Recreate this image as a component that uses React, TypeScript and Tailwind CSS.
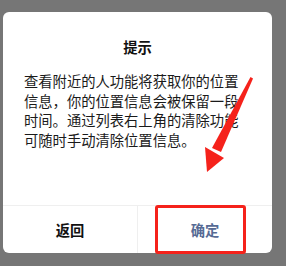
export default function App() {
  return (
    <div
      className="relative w-[286px] h-[266px] bg-[#767676] pt-[12px] pl-[3px] overflow-hidden"
      style={{ fontFamily: '"Noto Sans CJK SC", "Noto Sans", sans-serif' }}
    >
      <div className="flex flex-col w-[269px] h-[241px] bg-white rounded-[6px]">
        <div className="pt-[25px] h-[45px] text-center text-[14.3px] leading-[20px] font-bold text-[#111]">
          提示
        </div>
        <p className="mt-[14px] px-[21px] text-[14.3px] leading-[19.5px] text-[#1a1a1a]">
          查看附近的人功能将获取你的位置信息，你的位置信息会被保留一段时间。通过列表右上角的清除功能可随时手动清除位置信息。
        </p>
        <div className="mt-auto flex h-[48px] border-t border-[#efefef]">
          <button className="flex-1 flex items-center justify-center text-[14.3px] font-bold text-[#111] border-r border-[#efefef]">
            返回
          </button>
          <button className="flex-1 flex items-center justify-center text-[14.3px] font-bold text-[#576b95]">
            确定
          </button>
        </div>
      </div>

      {/* annotation */}
      <div className="absolute left-[155px] top-[205px] w-[91px] h-[49px] border-[3px] border-[#f5221b] rounded-[3px]" />
      <svg className="absolute left-0 top-0" width="286" height="266" viewBox="0 0 286 266">
        <polygon points="250.5,77 253,78.5 221,152 212,148" fill="#f5221b" />
        <polygon points="205,147 224,158 207,172" fill="#f5221b" />
      </svg>
    </div>
  );
}
